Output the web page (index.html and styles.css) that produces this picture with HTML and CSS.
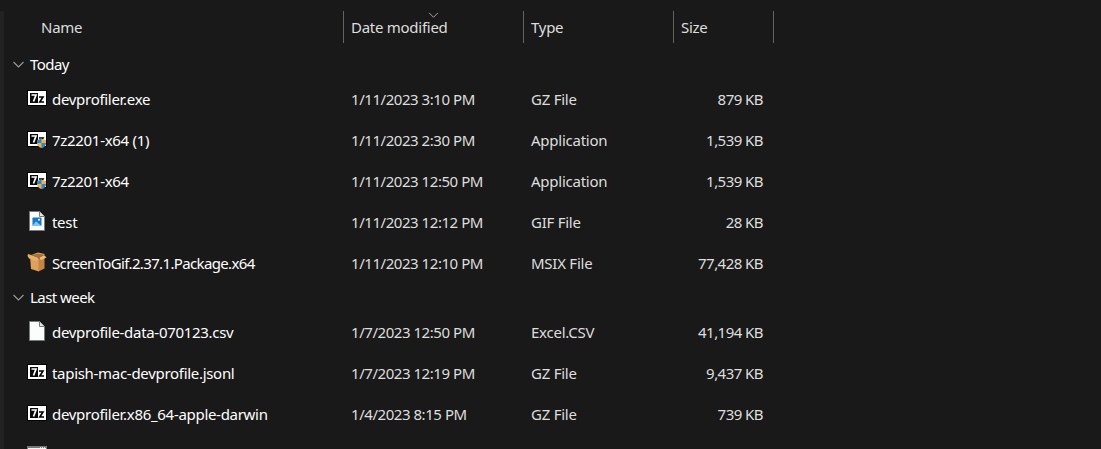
FILE: index.html
```
<!DOCTYPE html>
<html lang="en">
<head>
<meta charset="utf-8">
<title>Downloads</title>
<link rel="stylesheet" href="styles.css">
</head>
<body>
<svg class="defs" width="0" height="0" aria-hidden="true">
  <symbol id="archive" viewBox="0 0 20 20">
    <rect x="0" y="2" width="20" height="16" fill="#000"/>
    <rect x="1" y="3" width="18" height="14" fill="#fff"/>
    <rect x="3" y="5" width="8" height="10" fill="#080808"/>
    <path d="M4.500 7H9L6.500 13.500" fill="none" stroke="#fff" stroke-width="1.700"/>
    <path d="M12 9H16L12.800 14H17" fill="none" stroke="#000" stroke-width="1.600"/>
  </symbol>
  <symbol id="installer" viewBox="0 0 20 20">
    <use href="#archive" width="20" height="20"/>
    <path d="M14.500 9.500Q16.500 10.800 19 11V14Q19 17.500 14.500 19Q10 17.500 10 14V11Q12.500 10.800 14.500 9.500Z" fill="#f3ad4c"/>
    <path d="M14.500 9.500V14H10V11Q12.500 10.800 14.500 9.500ZM14.500 14H19Q18.800 17.500 14.500 19Z" fill="#2789cf"/>
  </symbol>
  <symbol id="page" viewBox="0 0 20 20">
    <path d="M2.500 .5H12.500L17.500 5.500V19.500H2.500Z" fill="#fbfcfc" stroke="#77797a"/>
    <path d="M12.500 .5V5.500H17.500" fill="#e4e6e6" stroke="#77797a"/>
  </symbol>
  <symbol id="image" viewBox="0 0 20 20">
    <use href="#page" width="20" height="20"/>
    <rect x="5.500" y="6.500" width="9" height="8.500" rx=".8" fill="#1976c5"/>
    <path d="M5.500 14.500L9 10.200L14.500 15H5.500Z" fill="#7cc6f5"/>
    <circle cx="12" cy="8.800" r="1" fill="#fff"/>
  </symbol>
  <symbol id="box" viewBox="0 0 20 20">
    <path d="M3 4L12 7V19.500L4 17Z" fill="#dfa05b"/>
    <path d="M11.500 7L17.500 5V16.500L11.500 19.500Z" fill="#c58443"/>
    <path d="M4 3L11 1L17 3L12 6Z" fill="#a86f38"/>
    <path d="M1 2L4 3L12 6L9.500 9L2 6.500L.5 4Z" fill="#e8b16b"/>
    <path d="M12 6L17 3L19.500 5.500L14 8Z" fill="#efbb78"/>
    <path d="M4 3L11 .5L18 2L17 3L11 1.800Z" fill="#d59b59"/>
  </symbol>
  <symbol id="window" viewBox="0 0 20 20">
    <rect x="0" y="2" width="20" height="17" fill="#777"/>
    <path d="M13 3h1v1h-1zM15 3h1v1h-1zM17 3h1v1h-1z" fill="#ddd"/>
    <rect x="1" y="4" width="18" height="14" fill="#f3f3f3"/>
  </symbol>
  <symbol id="chevron" viewBox="0 0 12 8">
    <path d="M1 1L6 6L11 1" fill="none" stroke="currentColor" stroke-width="1.100"/>
  </symbol>
</svg>
<main class="files">
  <header class="columns">
    <div class="heading heading-name">Name</div>
    <div class="heading">Date modified<svg class="sort"><use href="#chevron"/></svg></div>
    <div class="heading">Type</div>
    <div class="heading">Size</div>
  </header>
  <section>
    <h2 class="group"><svg class="toggle"><use href="#chevron"/></svg><span class="label">Today</span></h2>
    <div class="row"><svg class="icon"><use href="#archive"/></svg><span class="name">devprofiler.exe</span><span class="date">1/11/2023 3:10 PM</span><span class="type">GZ File</span><span class="size">879 KB</span></div>
    <div class="row"><svg class="icon"><use href="#installer"/></svg><span class="name">7z2201-x64 (1)</span><span class="date">1/11/2023 2:30 PM</span><span class="type">Application</span><span class="size">1,539 KB</span></div>
    <div class="row"><svg class="icon"><use href="#installer"/></svg><span class="name">7z2201-x64</span><span class="date">1/11/2023 12:50 PM</span><span class="type">Application</span><span class="size">1,539 KB</span></div>
    <div class="row"><svg class="icon"><use href="#image"/></svg><span class="name">test</span><span class="date">1/11/2023 12:12 PM</span><span class="type">GIF File</span><span class="size">28 KB</span></div>
    <div class="row"><svg class="icon"><use href="#box"/></svg><span class="name tight">ScreenToGif.2.37.1.Package.x64</span><span class="date">1/11/2023 12:10 PM</span><span class="type">MSIX File</span><span class="size">77,428 KB</span></div>
  </section>
  <section>
    <h2 class="group"><svg class="toggle"><use href="#chevron"/></svg><span class="label">Last week</span></h2>
    <div class="row"><svg class="icon"><use href="#page"/></svg><span class="name">devprofile-data-070123.csv</span><span class="date">1/7/2023 12:50 PM</span><span class="type">Excel.CSV</span><span class="size">41,194 KB</span></div>
    <div class="row"><svg class="icon"><use href="#archive"/></svg><span class="name">tapish-mac-devprofile.jsonl</span><span class="date">1/7/2023 12:19 PM</span><span class="type">GZ File</span><span class="size">9,437 KB</span></div>
    <div class="row"><svg class="icon"><use href="#archive"/></svg><span class="name">devprofiler.x86_64-apple-darwin</span><span class="date">1/4/2023 8:15 PM</span><span class="type">GZ File</span><span class="size">739 KB</span></div>
    <div class="row"><svg class="icon"><use href="#window"/></svg></div>
  </section>
</main>
</body>
</html>
```
FILE: styles.css
```
* { box-sizing: border-box; }
body {
  margin: 0;
  height: 449px;
  overflow: hidden;
  background: #191919;
  color: #fff;
  font: 15px/20px "Noto Sans", "Open Sans", sans-serif;
  letter-spacing: -0.45px;
}
.defs { position: absolute; }
.files {
  margin-top: 11px;
  height: 438px;
  overflow: hidden;
  border-left: 4px solid #222;
}
.columns {
  display: grid;
  grid-template-columns: 340px 180px 150px 100px;
  height: 32px;
  margin-bottom: 8px;
  color: #dedede;
  letter-spacing: -0.27px;
}
.heading {
  position: relative;
  padding: 6px 0 0 7px;
  border-right: 1px solid #636363;
}
.heading-name { padding-left: 37px; }
.sort {
  position: absolute;
  left: 84px;
  top: 1px;
  width: 11px;
  height: 7px;
  color: #aaa;
}
.group {
  display: flex;
  align-items: center;
  height: 28px;
  margin: 0;
  padding-left: 8px;
  font-size: 15px;
  font-weight: 400;
}
.label { padding-bottom: 2px; letter-spacing: -0.55px; }
.toggle {
  width: 13px;
  height: 8px;
  margin-right: 5px;
  color: #9b9b9b;
}
.row {
  display: grid;
  grid-template-columns: 20px 295px 180px 150px 91px;
  align-items: center;
  height: 41px;
  padding-left: 23px;
}
.icon { width: 20px; height: 20px; margin-bottom: 3px; }
.name, .date, .type, .size { padding-bottom: 2px; }
.name { padding-left: 5px; letter-spacing: -0.3px; }
.tight { letter-spacing: -0.64px; }
.date, .type, .size { color: #dedede; }
.date { padding-left: 9px; }
.type { padding-left: 9px; letter-spacing: -0.25px; }
.size { text-align: right; letter-spacing: -0.55px; }
```
